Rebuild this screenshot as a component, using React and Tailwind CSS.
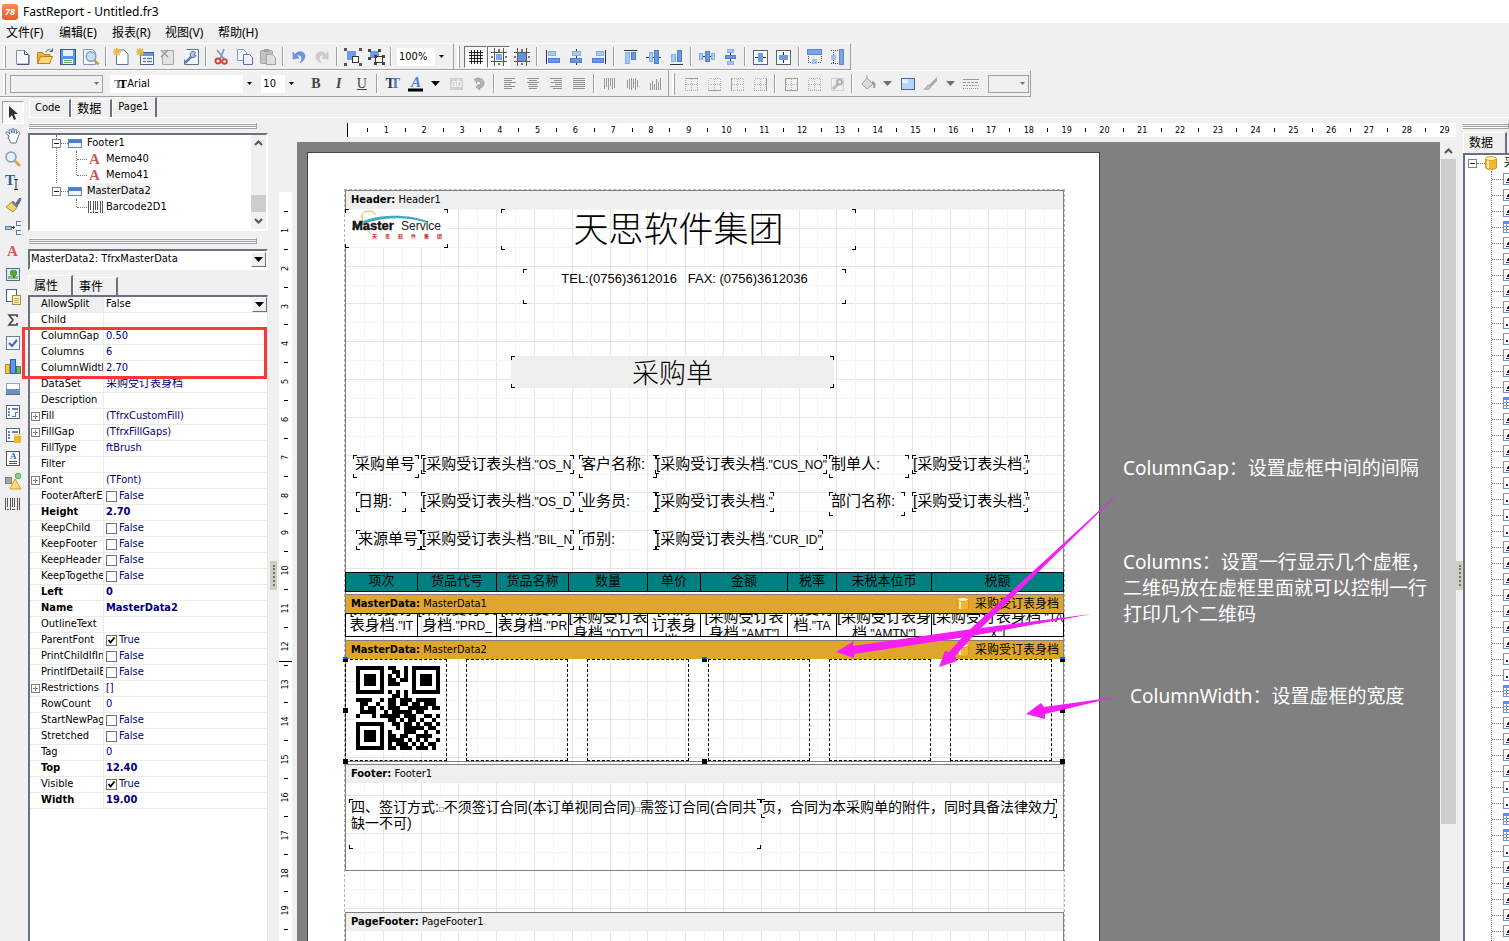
import React, { useState } from 'react';

const Svg = ({ s = 18, crisp, children }) => (
    <svg width={s} height={s} viewBox={`0 0 ${s} ${s}`} fill="none" shapeRendering={crisp ? 'crispEdges' : 'auto'} className="shrink-0">
        {children}
    </svg>
);

/* ---------- toolbar icons ---------- */

const PAGE = <path d="M4 2h7l4 4v10.500H3.500V2z" fill="#fff" stroke="#5b7499" />;
const SPARK = <path d="M4 0v8M0 4h8M1 1l6 6M7 1L1 7" stroke="#e8b93c" strokeWidth="1.500" />;

const NewIcon = () => <Svg><path d="M3.500 2.500h8l4 4v9.500h-12z" fill="#f6f9ff" stroke="#8194b3" /><path d="M11.500 2.500v4h4M4 16.500h12V7" stroke="#41597f" /></Svg>;
const OpenIcon = () => (
    <Svg>
        <path d="M1.500 15.500v-11h5l1.500 2h6v9z" fill="#f0b13d" stroke="#c07f22" />
        <path d="M1.500 15.500l3-7h12l-3 7z" fill="#ffd675" stroke="#c07f22" />
        <path d="M10 4c1-3 4-3 6-1M16.500.500v3h-3" stroke="#48658e" />
    </Svg>
);
const SaveIcon = () => (
    <Svg crisp>
        <rect x="1.500" y="1.500" width="15" height="15" fill="#5f92e0" stroke="#315b9f" />
        <rect x="4" y="2" width="10" height="6" fill="#e8f0fc" />
        <rect x="4" y="11" width="10" height="5" fill="#fff" />
        <path d="M5 12.500h8M5 14.500h8" stroke="#67ac5a" />
    </Svg>
);
const PreviewIcon = () => (
    <Svg>
        <path d="M1.500 1.500h9l3 3v12h-12z" fill="#f6f9ff" stroke="#8194b3" />
        <circle cx="9" cy="8.500" r="4.800" fill="#c6e0f7" stroke="#7f9fc4" strokeWidth="1.500" />
        <path d="M12.500 12.500l4 4" stroke="#d59a3b" strokeWidth="2.500" />
    </Svg>
);
const NewPageIcon = () => <Svg>{PAGE}{SPARK}</Svg>;
const NewDialogIcon = () => (
    <Svg>
        <rect x="4.500" y="4.500" width="13" height="12" fill="#fff" stroke="#47648f" />
        <rect x="5" y="5" width="12" height="3" fill="#6797df" />
        <path d="M7 10.500h3M7 13.500h3M11 10.500h5M11 13.500h5" stroke="#5a7bac" strokeWidth="1.500" />
        {SPARK}
    </Svg>
);
const DeletePageIcon = () => (
    <Svg><path d="M4.500 2.500h10v14h-11v-8" fill="#e4e4e4" stroke="#a8a8a8" /><path d="M2 2l7 7M9 2L2 9" stroke="#9c9c9c" strokeWidth="1.600" /></Svg>
);
const PageSetupIcon = () => (
    <Svg>
        <path d="M4.500 1.500h12v15h-14v-5" fill="#f4f7fd" stroke="#5b7499" />
        <path d="M3 15l7-7" stroke="#5e83bb" strokeWidth="2.500" />
        <path d="M13.500 4.500a3 3 0 1 0 .500 3l-2-.500z" fill="#b9c9df" stroke="#4f6b96" />
    </Svg>
);
const CutIcon = () => (
    <Svg>
        <path d="M11 1L7 11M4 2l7 9" stroke="#7d9cc4" strokeWidth="1.800" />
        <circle cx="5" cy="13" r="2.500" stroke="#d23c32" strokeWidth="1.800" /><circle cx="11.500" cy="13.500" r="2.300" stroke="#d23c32" strokeWidth="1.800" />
    </Svg>
);
const CopyIcon = () => (
    <Svg>
        <path d="M1.500 1.500h6l3 3v8h-9z" fill="#f5f8ff" stroke="#7f97bd" />
        <path d="M7.500 6.500h6l3 3v7h-9z" fill="#eaf1fd" stroke="#56729f" />
    </Svg>
);
const PasteIcon = () => (
    <Svg>
        <rect x="1.500" y="2.500" width="12" height="13" rx="1" fill="#c2c2c2" stroke="#a3a3a3" />
        <rect x="5" y="1" width="5" height="3" fill="#a0a0a0" />
        <path d="M7.500 6.500h6l3 3v7h-9z" fill="#dedede" stroke="#a0a0a0" />
    </Svg>
);
const UndoIcon = () => <Svg><path d="M5 7c2-5 10-4 10 1 0 3-2 5-5 7 2-3 3-7-1-8-1 0-2 1-2 1l2 2-6 1V4z" fill="#6d97e2" stroke="#4a74bd" strokeWidth=".500" /></Svg>;
const RedoIcon = () => <Svg><path d="M13 7c-2-5-10-4-10 1 0 3 2 5 5 7-2-3-3-7 1-8 1 0 2 1 2 1l-2 2 6 1V4z" fill="#cfcfcf" stroke="#b5b5b5" strokeWidth=".500" /></Svg>;
const GroupIcon = () => (
    <Svg crisp>
        <rect x="3" y="3" width="9" height="9" fill="#6d9be8" /><rect x="8.500" y="8.500" width="6" height="6" fill="#fff" stroke="#333" />
        {[[0, 0], [15, 0], [0, 15], [15, 15]].map(([x, y]) => <rect key={`${x}-${y}`} x={x} y={y} width="3" height="3" fill="#555" />)}
    </Svg>
);
const UngroupIcon = () => (
    <Svg crisp>
        <rect x="3" y="3" width="9" height="7" fill="#6d9be8" /><rect x="8.500" y="8.500" width="7" height="6" fill="#fff" stroke="#333" />
        {[[1, 1], [11, 1], [1, 9], [7, 7], [15, 7], [7, 14], [15, 14]].map(([x, y]) => <rect key={`${x}-${y}`} x={x} y={y} width="3" height="3" fill="#444" />)}
    </Svg>
);

const GridIcon = () => <Svg crisp><path d="M4.500 2v14M7.500 2v14M10.500 2v14M13.500 2v14M2 4.500h14M2 7.500h14M2 10.500h14M2 13.500h14" stroke="#222" /></Svg>;
const AlignGridIcon = () => (
    <Svg crisp><path d="M4.500 0v18M13.500 0v18M1 4.500h16M1 13.500h16" stroke="#555" /><rect x="6" y="6" width="6" height="6" fill="#7ba9ee" /><path d="M9 1v3M9 15v2M1 9h2M15 9h2" stroke="#777" strokeWidth="2" /></Svg>
);
const FitGridIcon = () => (
    <Svg crisp><path d="M4.500 0v18M13.500 0v18M1 4.500h16M1 13.500h16" stroke="#555" /><rect x="5" y="5" width="8" height="8" fill="#6294e2" /><path d="M9 1v3M9 15v2M1 9h2M15 9h2" stroke="#777" strokeWidth="2" /></Svg>
);

// each entry is a list of [x, y, w, h] bars plus the guide line
const alignShapes = {
    left: { bars: [[4, 3, 8, 5], [4, 10, 12, 5]], line: 'M2.5 2v14' },
    hcenter: { bars: [[5, 3, 9, 5], [3, 10, 12, 5]], line: 'M9.5 1v16' },
    right: { bars: [[6, 3, 8, 5], [2, 10, 12, 5]], line: 'M15.5 2v14' },
    top: { bars: [[4, 4, 5, 12], [10, 4, 5, 8]], line: 'M3 2.5h13' },
    vcenter: { bars: [[5, 4, 4, 10], [10, 2, 5, 14]], line: 'M2 9.5h15' },
    bottom: { bars: [[4, 6, 5, 8], [10, 2, 5, 12]], line: 'M3 16.5h13' },
    hspace: { bars: [[1, 5, 4, 7], [7, 3, 5, 11], [13, 5, 4, 7]], line: 'M2 8.5h15' },
    vspace: { bars: [[6, 1, 7, 4], [4, 7, 11, 4], [6, 13, 7, 4]], line: 'M9.5 1v16' },
};
const AlignIcon = ({ kind }) => (
    <Svg crisp>
        <path d={alignShapes[kind].line} stroke="#333" />
        {alignShapes[kind].bars.map(([x, y, w, h], i) => (
            <rect key={i} x={x + 0.5} y={y + 0.5} width={w - 1} height={h - 1} fill={i % 2 ? '#6d96e0' : '#a5c9fa'} stroke={i % 2 ? '#4f7fd0' : '#84b0f0'} />
        ))}
    </Svg>
);
const CenterHIcon = () => <Svg crisp><rect x="1.500" y="2.500" width="14" height="14" fill="#fff" stroke="#55647c" /><path d="M3 9.500h11" stroke="#333" /><rect x="6" y="5" width="5" height="9" fill="#6d9be8" /></Svg>;
const CenterVIcon = () => <Svg crisp><rect x="1.500" y="2.500" width="14" height="14" fill="#fff" stroke="#55647c" /><path d="M8.500 4v11" stroke="#333" /><rect x="4" y="7" width="9" height="5" fill="#6d9be8" /></Svg>;
const SameWidthIcon = () => <Svg crisp><rect x="1.500" y="1.500" width="14" height="5" fill="#7ba5ea" stroke="#5c87cf" /><path d="M2 8v5M15 8v5M2 14.500h13" stroke="#444" strokeDasharray="1 1" /><rect x="6" y="11" width="5" height="5" fill="#9cc3f8" /></Svg>;
const SameHeightIcon = () => <Svg crisp><rect x="10.500" y="1.500" width="4" height="15" fill="#7ba5ea" stroke="#5c87cf" /><path d="M2 2.500h7M2 15.500h7M4.500 2v14" stroke="#444" strokeDasharray="1 1" /><rect x="2" y="7" width="5" height="5" fill="#9cc3f8" /></Svg>;

const FontStyleIcon = () => (
    <span className="font-['Liberation_Serif'] text-[14px] leading-none font-bold"><span className="text-[#26364f]">T</span><span className="-ml-1 text-[#4d79b8]">T</span></span>
);
const FontColorIcon = () => (
    <Svg><text x="4" y="12" fontFamily="Liberation Serif" fontWeight="bold" fontStyle="italic" fontSize="15" fill="#4b82d4">A</text><path d="M1 15h15" stroke="#000" strokeWidth="3" /></Svg>
);
const HighlightIcon = () => <Svg><rect x="3" y="3" width="13" height="12" fill="#cfcfcf" /><text x="4" y="12" fontFamily="Liberation Sans" fontSize="10" fill="#fff">ab</text></Svg>;
const RotateIcon = () => <Svg><path d="M4 5c4-4 10-1 10 3 0 3-2 5-5 5l1 2-4-3 3-3v2c3-1 2-5-1-5-2 0-2 2-1 3" fill="#b5b5b5" stroke="#9f9f9f" /></Svg>;

const textLines = {
    left: [[3, 14], [3, 11], [3, 15], [3, 10], [3, 14], [3, 11]],
    center: [[3, 15], [5, 13], [3, 15], [5, 13], [4, 14], [5, 13]],
    right: [[3, 15], [7, 15], [4, 15], [8, 15], [3, 15], [6, 15]],
    justify: [[3, 15], [3, 15], [3, 15], [3, 15], [3, 15], [3, 15]],
};
const TextAlignIcon = ({ kind }) => (
    <Svg crisp>{textLines[kind].map(([a, b], i) => <path key={i} d={`M${a} ${3.5 + i * 2}H${b}`} stroke="#8f8f8f" />)}</Svg>
);
const barTops = { top: [3, 3, 3, 3, 3, 3], middle: [5, 4, 3, 4, 3, 5], bottom: [8, 6, 9, 4, 7, 3] };
const barEnds = { top: [14, 12, 15, 11, 14, 13], middle: [13, 14, 15, 13, 15, 12], bottom: [15, 15, 15, 15, 15, 15] };
const TextVAlignIcon = ({ kind }) => (
    <Svg crisp>{barTops[kind].map((t, i) => <path key={i} d={`M${3.5 + i * 2} ${t}V${barEnds[kind][i]}`} stroke="#999" />)}</Svg>
);
const frameEdges = { top: 'M3 3.5h13', bottom: 'M3 15.5h13', left: 'M3.5 3v13', right: 'M15.5 3v13', all: 'M3.5 3.5h12v12h-12z', none: '' };
const FrameIcon = ({ kind }) => (
    <Svg crisp>
        <path d="M3.500 3.500h12v12h-12zM9.500 4v11M4 9.500h11" stroke="#b3b3b3" strokeDasharray="1 1" />
        <path d={frameEdges[kind]} stroke="#9d9d9d" />
    </Svg>
);
const FrameEditIcon = () => (
    <Svg><path d="M3.500 3.500h12v12h-12z" stroke="#b3b3b3" strokeDasharray="1 1" /><path d="M5 14l6-6" stroke="#bbb" strokeWidth="3" /><circle cx="11.500" cy="7" r="2.500" stroke="#b0b0b0" strokeWidth="2" /></Svg>
);
const FillIcon = () => <Svg><path d="M8 3l6 6-6 5-5-5zM8 3V0" fill="#dcdcdc" stroke="#9e9e9e" /><path d="M13 7c3 1 3 3 2 6" stroke="#999" strokeWidth="2" /></Svg>;
const FrameFillIcon = () => (
    <Svg crisp><rect x="2.500" y="3.500" width="13" height="11" fill="#b8d2fb" stroke="#47679c" /><path d="M3 4h6v4H3z" fill="#e6effe" /></Svg>
);
const PenIcon = () => <Svg><path d="M15 2L7 10l2 2 6-6z" fill="#a8a8a8" /><path d="M7 10c-3 0-2 3-5 4 3 1 6 0 7-2z" fill="#bfbfbf" stroke="#a8a8a8" /></Svg>;
const LineStyleIcon = () => (
    <Svg crisp><path d="M1 4.500h16" stroke="#999" /><path d="M1 7.500h16" stroke="#999" strokeDasharray="3 1" /><path d="M1 10.500h16" stroke="#999" strokeDasharray="2 1" /><path d="M1 13.500h16" stroke="#999" strokeDasharray="1 1" /></Svg>
);

/* ---------- object palette icons ---------- */

const PointerIcon = () => <Svg><path d="M5 2v12l3-3 2 5 2-1-2-5h4z" fill="#2f3235" /></Svg>;
const HandIcon = () => <Svg><path d="M5 9L2 6.500c-1-1 1-2 2-1L6 7 5 3c0-1 1.500-1 2 0l1 3V2c0-1 2-1 2 0v4l1-3c.500-1 2-.500 1.700.500L12 7l2-2c1-.700 2 .300 1.500 1.300L13 13l-1 3H7L4 11z" fill="#fff" stroke="#5877a3" /></Svg>;
const LensIcon = () => <Svg><path d="M11 11l5 5" stroke="#d8a848" strokeWidth="3" /><circle cx="7" cy="7" r="5" fill="#e6f1fb" stroke="#7a9cc8" strokeWidth="1.500" /></Svg>;
const TextToolIcon = () => (
    <Svg><text x="1" y="12" fontFamily="Liberation Serif" fontWeight="bold" fontSize="15" fill="#2c6092">T</text><path d="M10 6.500h4M12 7v9M10 16.500h4" stroke="#333" /></Svg>
);
const BrushIcon = () => <Svg><path d="M12 7l4-5 1 1-3 6z" fill="#52698e" stroke="#52698e" /><path d="M9 5l5 5-5 6-7-5z" fill="#f3d36b" stroke="#b78f30" /><path d="M9 5l5 5-1.500 1.500-5-5z" fill="#5b7bb0" /></Svg>;
const LinkBandIcon = () => <Svg crisp><rect x="1" y="7" width="6" height="3" fill="#a9c5e8" stroke="#5e7ea6" /><path d="M7 8.500h4M9.500 7v3" stroke="#333" /><path d="M17 2.500h-5v4h5M17 11.500h-5v4h5" stroke="#5e7ea6" /></Svg>;
const MemoIcon = () => <Svg s={16}><text x="2" y="13" fontFamily="Liberation Serif" fontWeight="bold" fontSize="15" fill="#cf5d5d">A</text></Svg>;
const PictureIcon = () => <Svg crisp><rect x="2.500" y="3.500" width="13" height="12" fill="#d9ebfa" stroke="#4d6f8f" /><rect x="4" y="11" width="10" height="3" fill="#8cc26c" /><circle cx="9.500" cy="8" r="3.500" fill="#5ba246" /><path d="M9.500 11v2" stroke="#7c5a30" strokeWidth="2" /></Svg>;
const SubreportIcon = () => <Svg crisp><path d="M2.500 1.500h10v12h-10z" fill="#fff" stroke="#47648f" /><rect x="8.500" y="7.500" width="8" height="9" fill="#fdf3c0" stroke="#a98a38" /><path d="M10 10.500h5M10 12.500h5M10 14.500h5" stroke="#c9a850" /></Svg>;
const SumIcon = () => <Svg><path d="M13 6V4H5l4 5-4 5h8v-2" stroke="#444" strokeWidth="1.600" /></Svg>;
const CheckIcon = () => <Svg><rect x="2.500" y="2.500" width="13" height="13" fill="#f2f6fc" stroke="#6c7d99" /><path d="M5 9l3 3 5-6" stroke="#44689e" strokeWidth="2" /></Svg>;
const ChartIcon = () => <Svg crisp><rect x="1.500" y="7.500" width="4" height="9" fill="#f2c84c" stroke="#b88a22" /><rect x="6.500" y="2.500" width="5" height="14" fill="#5f9aea" stroke="#2c5faf" /><rect x="12.500" y="9.500" width="4" height="7" fill="#74b466" stroke="#4a853d" /></Svg>;
const BandIcon = () => <Svg crisp><rect x="2.500" y="3.500" width="13" height="11" fill="#fff" stroke="#8ea6c8" /><rect x="2" y="9" width="14" height="6" fill="#6b8fbe" /><path d="M2 14.500h14" stroke="#4d6d99" /></Svg>;
const CrossTabIcon = ({ db }) => (
    <Svg crisp>
        <rect x="2.500" y="2.500" width="13" height="13" fill="#fff" stroke="#47648f" />
        <path d="M4 5.500h2M8 5.500h6M4 8.500h2M4 11.500h2" stroke="#6684ad" strokeWidth="2" />
        {db ? <g><rect x="10" y="9" width="7" height="8" fill="#efb431" /><rect x="10" y="8" width="7" height="2" fill="#fbe08a" /></g> : <path d="M8 13.500h3v-4h3" stroke="#4d7db8" />}
    </Svg>
);
const RichIcon = () => <Svg crisp><rect x="2.500" y="2.500" width="13" height="14" fill="#fff" stroke="#555" /><text x="6" y="10" fontFamily="Liberation Serif" fontWeight="bold" fontSize="9" fill="#35639c">A</text><path d="M5 12.500h8M5 14.500h8" stroke="#555" /></Svg>;
const ShapesIcon = () => <Svg><rect x="1.500" y="5.500" width="6" height="6" fill="#a6a6a6" stroke="#808080" /><circle cx="14" cy="4" r="2.800" fill="#8dd08d" stroke="#5cab5c" /><path d="M11 7l6 10H6z" fill="#fbdb72" stroke="#d2a136" /></Svg>;
const BarcodeIcon = ({ s }) => <Svg s={s} crisp><path d="M1.500 3v12M3.500 3v9M6 3v12M8.500 3v9M10.500 3v9M13 3v12M15.500 3v12" stroke="#555" /><path d="M6.500 3v9M13.500 3v9M3 14.500h2M8 14.500h3" stroke="#555" /></Svg>;

const DbIcon = () => (
    <svg width="12" height="14" viewBox="0 0 12 14" className="shrink-0">
        <path d="M.500 2.500v9c0 2.500 11 2.500 11 0v-9" fill="#f2b632" stroke="#d8941a" />
        <path d="M3 4v8" stroke="#fff0b8" strokeWidth="2" />
        <ellipse cx="6" cy="2.500" rx="5.500" ry="2" fill="#fdf0c0" stroke="#e0a52c" />
    </svg>
);

/* ---------- small controls ---------- */

const ToolButton = ({ label, on, arrow, children }) => (
    <button
        aria-label={label}
        className={`flex h-[22px] shrink-0 items-center justify-center ${arrow ? 'w-[17px]' : 'w-[23px]'} ${on ? 'border border-t-gray-500 border-l-gray-500 border-r-white border-b-white bg-[#f8f8f8]' : ''}`}
    >
        {children}
    </button>
);
const Sep = () => <div className="mx-[3px] h-[19px] w-[2px] shrink-0 border-l border-[#a0a0a0] bg-white" />;
const Grip = () => <div className="mr-1 ml-[3px] h-[22px] w-[3px] shrink-0 border-r border-[#a0a0a0] bg-white" />;
const Caret = ({ color = 'text-black', big }) => (
    <svg width={big ? 9 : 5} height={big ? 5 : 3} viewBox="0 0 10 6" preserveAspectRatio="none" className={color}><path d="M0 0h10L5 6z" fill="currentColor" /></svg>
);

const Combo = ({ label, value, width, pad = 'pl-1', disabled }) => (
    <div className={`relative flex h-[18px] shrink-0 items-center ${width} ${disabled ? 'border border-[#a0a0a0]' : 'bg-white'}`}>
        <select aria-label={label} disabled={disabled} className={`h-full w-full appearance-none bg-transparent text-[11px] leading-none opacity-100 outline-none ${pad}`}>
            <option>{value}</option>
        </select>
        <div className="pointer-events-none absolute inset-y-0 right-0 flex w-3 items-center justify-center bg-[#f0f0f0]">
            <Caret color={disabled ? 'text-gray-500' : 'text-black'} />
        </div>
    </div>
);

const Toolbar = ({ width, children }) => (
    <div className={`flex h-[27px] shrink-0 items-center border-t border-r border-b border-t-white border-r-[#a0a0a0] border-b-[#a0a0a0] ${width}`}>
        <Grip />
        {children}
    </div>
);

const DoubleLine = () => (
    <div className="flex h-[6px] shrink-0 flex-col justify-between border-r border-[#a0a0a0]">
        <div className="h-[2px] border-b border-[#a0a0a0] bg-white" />
        <div className="h-[3px] border-y border-[#a0a0a0] bg-white" />
    </div>
);

const Tab = ({ active, children }) => (
    <button className={`shrink-0 border-t border-l border-t-white border-l-white border-r-2 border-r-gray-500 px-[5px] text-left whitespace-nowrap ${active ? 'h-full' : 'h-[18px]'}`}>
        {children}
    </button>
);

/* ---------- left side ---------- */

const palette = [PointerIcon, HandIcon, LensIcon, TextToolIcon, BrushIcon, LinkBandIcon, MemoIcon, PictureIcon, SubreportIcon, SumIcon, CheckIcon, ChartIcon, BandIcon, CrossTabIcon, () => <CrossTabIcon db />, RichIcon, ShapesIcon, BarcodeIcon];

const ObjectPalette = () => (
    <aside className="flex w-7 shrink-0 flex-col items-start border-t border-white pt-[3px] pl-[2px]">
        {palette.map((Icon, i) => (
            <button key={i} aria-label={`tool ${i + 1}`} className={`flex h-[23px] w-[22px] items-center justify-center ${i === 0 ? 'border border-t-gray-400 border-l-gray-400 border-r-white border-b-white bg-[#f8f8f8]' : ''}`}>
                <Icon />
            </button>
        ))}
    </aside>
);

const Expander = ({ plus }) => (
    <svg width="9" height="9" viewBox="0 0 9 9" shapeRendering="crispEdges" className="shrink-0">
        <rect x=".500" y=".500" width="8" height="8" fill="#fff" stroke="#808080" />
        <path d={plus ? 'M2 4.500h5M4.500 2v5' : 'M2 4.500h5'} stroke={plus ? '#808080' : '#222'} />
    </svg>
);
const Dots = ({ w }) => <div className={`shrink-0 border-t border-dotted border-gray-500 ${w}`} />;

const BandGlyph = () => <div className="h-[9px] w-[14px] shrink-0 border border-[#5f86bd] bg-linear-to-b from-[#4a7fd0] from-40% to-[#eef4fc] to-50%" />;

const ObjectTree = () => (
    <div className="flex h-[98px] shrink-0 border-2 border-t-gray-500 border-l-gray-500 border-r-white border-b-white bg-white">
        <div className="relative min-w-0 flex-1 text-[11px] whitespace-nowrap">
            <div className="absolute top-0 left-[26px] h-12 border-l border-dotted border-gray-500" />
            <div className="absolute top-4 left-[46px] h-6 border-l border-dotted border-gray-500" />
            <div className="absolute top-[64px] left-[46px] h-2 border-l border-dotted border-gray-500" />
            <div className="relative flex h-4 items-center pl-[22px]"><Expander /><Dots w="w-[7px]" /><BandGlyph /><span className="ml-[5px]">Footer1</span></div>
            <div className="flex h-4 items-center pl-[47px]"><Dots w="w-[10px]" /><MemoIcon /><span className="ml-[3px]">Memo40</span></div>
            <div className="flex h-4 items-center pl-[47px]"><Dots w="w-[10px]" /><MemoIcon /><span className="ml-[3px]">Memo41</span></div>
            <div className="relative flex h-4 items-center pl-[22px]"><Expander /><Dots w="w-[7px]" /><BandGlyph /><span className="ml-1 bg-[#f0f0f0] px-px">MasterData2</span></div>
            <div className="flex h-4 items-center pl-[47px]"><Dots w="w-[10px]" /><BarcodeIcon /><span className="ml-px">Barcode2D1</span></div>
        </div>
        <div className="flex w-[15px] shrink-0 flex-col items-center justify-between bg-[#f0f0f0] py-1">
            <svg width="9" height="9" viewBox="0 0 9 9"><path d="M1 6l3.500-3.500L8 6" fill="none" stroke="#555" strokeWidth="2" /></svg>
            <div className="mt-[42px] h-[17px] w-full bg-[#cdcdcd]" />
            <svg width="9" height="9" viewBox="0 0 9 9"><path d="M1 3l3.500 3.500L8 3" fill="none" stroke="#555" strokeWidth="2" /></svg>
        </div>
    </div>
);

const ClassicArrow = () => (
    <span className="pointer-events-none flex h-[15px] w-[15px] shrink-0 items-center justify-center border border-t-white border-l-white border-r-gray-500 border-b-gray-500 bg-[#f0f0f0]">
        <Caret big />
    </span>
);

// [name, value, flag]: b = bold, + = expandable, s = selected row
const props = [
    ['AllowSplit', 'False', 's'],
    ['Child', ''],
    ['ColumnGap', '0.50'],
    ['Columns', '6'],
    ['ColumnWidth', '2.70'],
    ['DataSet', '采购受订表身档'],
    ['Description', ''],
    ['Fill', '(TfrxCustomFill)', '+'],
    ['FillGap', '(TfrxFillGaps)', '+'],
    ['FillType', 'ftBrush'],
    ['Filter', ''],
    ['Font', '(TFont)', '+'],
    ['FooterAfterEach', false],
    ['Height', '2.70', 'b'],
    ['KeepChild', false],
    ['KeepFooter', false],
    ['KeepHeader', false],
    ['KeepTogether', false],
    ['Left', '0', 'b'],
    ['Name', 'MasterData2', 'b'],
    ['OutlineText', ''],
    ['ParentFont', true],
    ['PrintChildIfInvisible', false],
    ['PrintIfDetailEmpty', false],
    ['Restrictions', '[]', '+'],
    ['RowCount', '0'],
    ['StartNewPage', false],
    ['Stretched', false],
    ['Tag', '0'],
    ['Top', '12.40', 'b'],
    ['Visible', true],
    ['Width', '19.00', 'b'],
];

const PropRow = ({ name, value, flag }) => {
    const [checked, setChecked] = useState(value === true);
    const isBool = typeof value === 'boolean';
    const selected = flag === 's';
    return (
        <tr className={`h-4 ${flag === 'b' ? 'font-bold' : ''}`}>
            <th scope="row" className={`border-r border-b border-[#ebebeb] p-0 text-left ${selected ? 'bg-[#f0f0f0]' : ''} ${flag === 'b' ? 'font-bold' : 'font-normal'}`}>
                <div className="flex h-[15px] items-center overflow-hidden pl-px">
                    <span className="w-[10px] shrink-0">{flag === '+' && <Expander plus />}</span>
                    {name}
                </div>
            </th>
            <td className={`border-b border-[#ebebeb] p-0 ${selected ? 'text-black' : 'text-[#000080]'}`}>
                <div className="flex h-[15px] items-center pl-[2px]">
                    {isBool ? (
                        <label className="flex items-center gap-[2px]">
                            <span className="relative flex">
                                <input type="checkbox" checked={checked} onChange={() => setChecked(!checked)} className="h-[11px] w-[11px] appearance-none border border-gray-500 bg-white" />
                                {checked && <svg width="11" height="11" viewBox="0 0 11 11" className="pointer-events-none absolute inset-0"><path d="M2.500 5l2 2.500 4-5" fill="none" stroke="#000" strokeWidth="1.800" /></svg>}
                            </span>
                            {checked ? 'True' : 'False'}
                        </label>
                    ) : <span className="flex-1">{value}</span>}
                    {selected && <ClassicArrow />}
                </div>
            </td>
        </tr>
    );
};

const Inspector = () => (
    <section className="flex w-[242px] shrink-0 flex-col pt-[5px] pr-[2px] text-[11px]">
        <div className="mr-[11px] ml-px"><DoubleLine /></div>
        <div className="mt-1"><ObjectTree /></div>
        <div className="mt-[7px] mr-[11px] ml-px"><DoubleLine /></div>
        <div className="mt-[5px] flex h-[21px] shrink-0 items-center border-2 border-t-gray-500 border-l-gray-500 border-r-white border-b-white bg-white">
            <select aria-label="object" className="min-w-0 flex-1 appearance-none bg-transparent pl-px outline-none">
                <option>MasterData2: TfrxMasterData</option>
            </select>
            <ClassicArrow />
        </div>
        <div className="mt-[5px] flex h-5 shrink-0 items-end text-[12px]">
            <Tab active><span className="pr-2">属性</span></Tab>
            <Tab><span className="pr-2">事件</span></Tab>
        </div>
        <div className="relative min-h-0 flex-1 border-t-2 border-r border-l-2 border-t-gray-500 border-r-gray-200 border-l-gray-500 bg-white">
            <table className="w-full table-fixed border-separate border-spacing-0 whitespace-nowrap">
                <colgroup><col className="w-[74px]" /><col /></colgroup>
                <tbody>
                    {props.map(([name, value, flag]) => <PropRow key={name} name={name} value={value} flag={flag} />)}
                </tbody>
            </table>
            <div className="pointer-events-none absolute top-[30px] right-0 -left-2 h-[52px] border-[3px] border-[#f93838]" />
        </div>
    </section>
);

const Splitter = ({ top }) => (
    <div className={`w-[7px] shrink-0 ${top}`}>
        <div className="flex h-[29px] justify-center bg-[#cfcfc0] py-1"><div className="border-l-2 border-dotted border-gray-500" /></div>
    </div>
);

/* ---------- report page ---------- */

const FULL = 719;
const QR = [
    '111111101100101111111',
    '100000100110101000001',
    '101110101010101011101',
    '101110101101101011101',
    '101110101110001011101',
    '100000100000001000001',
    '111111101010101111111',
    '000000000110100000000',
    '111100101101110111110',
    '011001001101101101110',
    '010110101110011111011',
    '011110010111110110000',
    '100010111110111001101',
    '000000001101011010010',
    '111111100110110101101',
    '100000100010111110110',
    '101110101000111001001',
    '101110101101100111100',
    '101110101111010101001',
    '100000101011101010110',
    '111111101101110111010',
];

const QrCode = () => (
    <svg width="84" height="84" viewBox="0 0 21 21" shapeRendering="crispEdges" className="bg-white">
        {QR.map((row, y) => row.split('').map((c, x) => c === '1' && <rect key={`${x}-${y}`} x={x} y={y} width="1" height="1" />))}
    </svg>
);

// centimetre grid with a lighter half-centimetre line
const CmGrid = () => (
    <svg className="absolute inset-0 h-full w-full" shapeRendering="crispEdges">
        {Array.from({ length: 42 }, (_, i) => i + 1).map((i) => {
            const p = Math.round(i * 18.9) + 0.5;
            const color = i % 2 ? '#f6f6f6' : '#e5e5e5';
            return <path key={i} d={`M0 ${p}H${FULL}${p < FULL ? `M${p} 0V800` : ''}`} stroke={color} />;
        })}
    </svg>
);

const Corners = () => (
    <>
        <i className="absolute top-0 left-0 h-1 w-1 border-t border-l border-black" />
        <i className="absolute top-0 right-0 h-1 w-1 border-t border-r border-black" />
        <i className="absolute bottom-0 left-0 h-1 w-1 border-b border-l border-black" />
        <i className="absolute right-0 bottom-0 h-1 w-1 border-r border-b border-black" />
    </>
);

// report objects sit on a free canvas, so each carries its own box, measured from the band's outer edge
const Memo = ({ box: [x, y, w, h], className = '', children }) => (
    <div className={`absolute whitespace-nowrap ${className}`} style={{ left: x - 1, top: y - 1, width: w, height: h }}>
        {children}
        <Corners />
    </div>
);

// latin tails of the expressions are set smaller than the CJK part
const Expr = ({ text }) => {
    const at = text.search(/[."A-Z]/);
    if (at < 0) return text;
    return <>{text.slice(0, at)}<span className="text-[12px] leading-none">{text.slice(at)}</span></>;
};

const labels = [
    [8, 265, 66, 23, '采购单号'], [234, 265, 78, 23, '客户名称:'], [484, 265, 80, 23, '制单人:'],
    [11, 302, 50, 20, '日期:'], [234, 302, 78, 20, '业务员:'], [484, 302, 76, 24, '部门名称:'],
    [11, 340, 65, 20, '来源单号'], [234, 340, 78, 20, '币别:'],
];
const fields = [
    [76, 265, 153, 19, '."OS_N'], [310, 265, 172, 19, '."CUS_NO"'], [567, 265, 116, 19, '."'],
    [76, 302, 153, 20, '."OS_D'], [310, 302, 119, 20, '."'], [567, 302, 116, 20, '."'],
    [76, 340, 153, 20, '."BIL_N'], [310, 340, 168, 20, '."CUR_ID"'],
];

const columns = [
    ['项次', 'w-[72px]', ['[采购受订', '表身档."IT', '']],
    ['货品代号', 'w-[79px]', ['[采购受订表', '身档."PRD_', '']],
    ['货品名称', 'w-[72px]', ['[采购受订', '表身档."PR', '']],
    ['数量', 'w-[79px]', ['[采购受订表', '身档."QTY"]']],
    ['单价', 'w-[53px]', ['[采购', '订表身', '档."']],
    ['金额', 'w-[87px]', ['[采购受订表', '身档."AMT"]']],
    ['税率', 'w-[49px]', ['购受订', '档."TA', '']],
    ['未税本位币', 'w-[95px]', ['[采购受订表身', '档."AMTN"]']],
    ['税额', '', ['[采购受订表身档."TA', 'X"]']],
];
const Cols = () => <colgroup>{columns.map(([name, w]) => <col key={name} className={w} />)}</colgroup>;

const Band = ({ kind, name, master, children, className = '' }) => (
    <section className={`relative border-x border-t border-[#808080] ${className}`}>
        <header className={`relative flex h-[18px] items-center justify-between px-1 text-[11px] ${master ? 'bg-[#dfa62f]' : 'bg-[#efefef]'}`}>
            <span className="pl-px"><b>{kind}:</b> {name}</span>
            {master && <span className="flex items-center gap-[6px] text-[12px]"><DbIcon />采购受订表身档</span>}
        </header>
        {children}
    </section>
);

const Logo = () => (
    <svg width="102" height="38" viewBox="0 0 102 38" className="bg-white">
        <path d="M7 20C18 5 62 3 84 13l-2 1C60 6 24 8 8 21z" fill="#44a9bf" />
        <path d="M30 6c0-6-13-5-13 1 0 8 4 14 9 18" fill="none" stroke="#e2b23b" />
        <text x="7" y="21" fontFamily="Liberation Sans" fontSize="13" fontWeight="bold" fill="#111" stroke="#111" strokeWidth=".400">Master</text>
        <text x="56" y="21" fontFamily="Liberation Sans" fontSize="12" fill="#222">Service</text>
        {'天思软件集团'.split('').map((c, i) => <text key={c} x={27 + i * 13} y="29" fontFamily="Noto Sans CJK SC" fontSize="5" fontWeight="bold" fill="#c4291f">{c}</text>)}
    </svg>
);

const handles = [[0, 18], [359, 18], [717, 18], [0, 69], [717, 69], [0, 120], [359, 120], [717, 120]];

const ReportPage = () => (
    <div className="min-h-full w-[793px] shrink-0 border border-[#444] bg-white pt-[36px] pl-[36px]">
        <div className="relative min-h-[753px] w-[721px] border-x border-t border-dashed border-[#b5b5b5]">
            <CmGrid />
            <Band kind="Header" name="Header1" className="h-[404px]">
                <Memo box={[0, 19, 103, 39]}><Logo /></Memo>
                <Memo box={[156, 19, 355, 41]} className="text-center font-['Noto_Sans_CJK_SC'] text-[35px] leading-9 font-light">天思软件集团</Memo>
                <Memo box={[178, 79, 323, 35]} className="text-center font-['Liberation_Sans'] text-[13px] leading-5 whitespace-pre">{'TEL:(0756)3612016   FAX: (0756)3612036'}</Memo>
                <Memo box={[166, 166, 323, 32]} className="bg-[#efefef] text-center font-['Noto_Sans_CJK_SC'] text-[27px] leading-8 font-light">采购单</Memo>
                {labels.map(([x, y, w, h, text]) => (
                    <Memo key={text} box={[x, y, w, h]} className="pl-[2px] font-['Liberation_Sans','Noto_Sans_CJK_SC'] text-[15px] leading-[18px]">{text}</Memo>
                ))}
                {fields.map(([x, y, w, h, latin]) => (
                    <Memo key={`${x}-${y}`} box={[x, y, w, h]} className="pl-px font-['Liberation_Sans','Noto_Sans_CJK_SC'] text-[15px] leading-[18px]">
                        <Expr text={`[采购受订表头档${latin}`} />
                    </Memo>
                ))}
                <table className="absolute right-0 bottom-[2px] -left-px w-[719px] table-fixed border-collapse bg-[#008080] font-['Noto_Sans_CJK_SC'] text-[13px] leading-[14px]">
                    <Cols />
                    <thead><tr>{columns.map(([name]) => <th key={name} className="h-[19px] border border-black p-0 align-top font-normal">{name}</th>)}</tr></thead>
                </table>
            </Band>
            <Band kind="MasterData" name="MasterData1" master className="h-[46px]">
                <table className="relative -ml-px w-[719px] table-fixed border-collapse font-['Liberation_Sans','Noto_Sans_CJK_SC'] text-[15px] leading-4">
                    <Cols />
                    <tbody>
                        <tr>
                            {columns.map(([name, , lines]) => (
                                <td key={name} className="border border-black p-0">
                                    <div className="flex h-[22px] flex-col items-center justify-center overflow-hidden whitespace-nowrap">
                                        {lines.map((line, i) => <div key={i} className="h-4 shrink-0"><Expr text={line} /></div>)}
                                    </div>
                                </td>
                            ))}
                        </tr>
                    </tbody>
                </table>
            </Band>
            <Band kind="MasterData" name="MasterData2" master className="h-[122px] border-b">
                <div className="relative -ml-px flex gap-[19px]">
                    {[0, 1, 2, 3, 4, 5].map((i) => (
                        <div key={i} className="h-[102px] w-[102px] shrink-0 border border-dashed border-black pt-[6px] pl-[10px]">{i === 0 && <QrCode />}</div>
                    ))}
                </div>
                {handles.map(([x, y]) => <i key={`${x}-${y}`} className={`absolute -ml-[3px] h-[5px] w-[5px] bg-black ${y === 18 ? 'border-t-2 border-blue-600' : ''}`} style={{ left: x, top: y - 2 }} />)}
            </Band>
            <Band kind="Footer" name="Footer1" className="mt-[2px] h-[107px] border-b">
                <Memo box={[4, 35, 412, 50]} className="pl-[2px] font-['Liberation_Sans','Noto_Sans_CJK_SC'] text-[14px] leading-4">
                    四、签订方式:<span className="text-[8px] leading-none">□</span>不须签订合同(本订单视同合同)<span className="text-[8px] leading-none">□</span>需签订合同(合同共<br />缺一不可)
                </Memo>
                <Memo box={[416, 35, 296, 19]} className="pl-px font-['Liberation_Sans','Noto_Sans_CJK_SC'] text-[14px] leading-4">页，合同为本采购单的附件，同时具备法律效力</Memo>
            </Band>
            <Band kind="PageFooter" name="PageFooter1" className="mt-[41px] h-[60px]" />
        </div>
    </div>
);

const Notes = () => (
    <div className="pointer-events-none absolute inset-0 font-['Noto_Sans','Noto_Sans_CJK_SC'] text-[19px] leading-[26px] text-white">
        <p className="absolute top-[313px] left-[826px] whitespace-nowrap">ColumnGap：设置虚框中间的间隔</p>
        <p className="absolute top-[407px] left-[826px] whitespace-nowrap">Columns：设置一行显示几个虚框，<br />二维码放在虚框里面就可以控制一行<br />打印几个二维码</p>
        <p className="absolute top-[541px] left-[833px] whitespace-nowrap">ColumnWidth：设置虚框的宽度</p>
        <svg className="absolute inset-0 h-full w-full" fill="#f51ef5">
            <g transform="translate(-297 -142)">
                <path d="M1127 485L976 633 955 656l2 5-18 6 6-16 4 1 17-19z" />
                <path d="M1092 614L965 630l-112 16 1-5-18 11 18 6v-4l112-17z" />
                <path d="M1116 697l-72 10-3-4-15 11 19 5v-5z" />
            </g>
        </svg>
    </div>
);

const Designer = () => (
    <section className="flex min-w-0 flex-1 flex-col overflow-hidden pt-[5px] font-['DejaVu_Sans_Condensed'] text-[9px] leading-none">
        <div className="ml-[70px] flex h-[14px] shrink-0 overflow-hidden border-l border-black bg-white pl-[19px]">
            <div className="grid w-[1096px] shrink-0 grid-cols-29">
                {Array.from({ length: 29 }, (_, i) => (
                    <div key={i} className="flex items-center"><i className="h-1 w-px bg-black" /><span className="flex-1 text-center">{i + 1}</span></div>
                ))}
            </div>
        </div>
        <div className="mt-[5px] flex min-h-0 flex-1">
            <div className="relative mt-[50px] ml-[2px] w-[13px] shrink-0 overflow-hidden bg-white pt-[19px]">
                <div className="grid h-[756px] grid-rows-20">
                    {Array.from({ length: 20 }, (_, i) => (
                        <div key={i} className="flex flex-col items-center"><i className="h-px w-1 bg-black" /><span className="flex flex-1 -rotate-90 items-center">{i + 1}</span></div>
                    ))}
                </div>
                <i className="absolute top-[469px] left-0 h-px w-full bg-black" />
            </div>
            <div className="relative ml-[5px] min-w-0 flex-1 overflow-hidden bg-[#808080] pt-[10px] pl-[10px] font-['DejaVu_Sans_Condensed','Noto_Sans_CJK_SC'] leading-normal">
                <ReportPage />
                <Notes />
            </div>
            <div className="flex w-4 shrink-0 flex-col items-center bg-[#f0f0f0]">
                <svg width="9" height="17" viewBox="0 0 9 17" className="shrink-0"><path d="M1 11l3.500-3.500L8 11" fill="none" stroke="#555" strokeWidth="2" /></svg>
                <div className="h-[665px] w-[15px] bg-[#cdcdcd]" />
            </div>
        </div>
    </section>
);

/* ---------- right side ---------- */

const fieldTypes = 'AAATAAAAA..AAATAAAA....AAAAAAA..TTAAAA..TT.AAAAA'.split('');
const FieldGlyph = ({ type }) => (
    <svg width="14" height="12" viewBox="0 0 14 12" shapeRendering="crispEdges" className="shrink-0">
        <rect x=".500" y=".500" width="13" height="11" fill="#fff" stroke="#7594bd" />
        {type === 'A' && <path d="M3 9.500h3M4.500 8L8 2" stroke="#223" strokeWidth="1.500" />}
        {type === '.' && <rect x="3" y="7" width="2" height="2" fill="#223" />}
        {type === 'T' && <g><rect width="14" height="3" fill="#5b8df0" /><path d="M0 5.500h14M0 8.500h14M3.500 3v9M8.500 3v9" stroke="#7594bd" /></g>}
    </svg>
);

const DataPanel = () => (
    <aside className="flex w-[46px] shrink-0 flex-col overflow-hidden pt-[5px] text-[12px]">
        <DoubleLine />
        <div className="mt-[3px] flex h-[21px] shrink-0"><Tab active><span className="pr-[7px]">数据</span></Tab></div>
        <div className="relative min-h-0 flex-1 overflow-hidden border-t-2 border-l-2 border-gray-500 bg-white">
            <div className="absolute top-4 bottom-0 left-[26px] border-l border-dotted border-gray-500" />
            <div className="flex h-4 items-center pl-[3px] whitespace-nowrap"><Expander /><Dots w="w-2" /><DbIcon /><span className="ml-[7px]">采购受订表头档</span></div>
            {fieldTypes.map((t, i) => (
                <div key={i} className="flex h-4 items-center pl-[27px]"><Dots w="w-[11px]" /><FieldGlyph type={t} /></div>
            ))}
        </div>
    </aside>
);

/* ---------- window ---------- */

const menu = ['文件(F)', '编辑(E)', '报表(R)', '视图(V)', '帮助(H)'];

const App = () => (
    <div className="flex h-screen flex-col overflow-hidden bg-[#f0f0f0] font-['DejaVu_Sans_Condensed','Noto_Sans_CJK_SC',sans-serif] text-black">
        <header className="flex h-[23px] shrink-0 items-center gap-[5px] bg-white pl-[2px] font-['Noto_Sans'] text-[12px]">
            <span className="flex h-4 w-4 items-center justify-center rounded-[3px] bg-linear-to-b from-[#ff8a4a] to-[#f0592a] text-[9px] font-bold text-white italic">78</span>
            FastReport - Untitled.fr3
        </header>
        <nav className="flex h-5 shrink-0 items-center gap-[13px] pl-[6px] font-['Noto_Sans','Noto_Sans_CJK_SC'] text-[12px]">
            {menu.map((m) => <button key={m} className="w-10 text-left whitespace-nowrap">{m}</button>)}
        </nav>
        <div className="flex shrink-0">
            <Toolbar width="w-[454px]">
                <ToolButton label="New"><NewIcon /></ToolButton>
                <ToolButton label="Open"><OpenIcon /></ToolButton>
                <ToolButton label="Save"><SaveIcon /></ToolButton>
                <ToolButton label="Preview"><PreviewIcon /></ToolButton>
                <Sep />
                <ToolButton label="New page"><NewPageIcon /></ToolButton>
                <ToolButton label="New dialog"><NewDialogIcon /></ToolButton>
                <ToolButton label="Delete page"><DeletePageIcon /></ToolButton>
                <ToolButton label="Page settings"><PageSetupIcon /></ToolButton>
                <Sep />
                <ToolButton label="Cut"><CutIcon /></ToolButton>
                <ToolButton label="Copy"><CopyIcon /></ToolButton>
                <ToolButton label="Paste"><PasteIcon /></ToolButton>
                <Sep />
                <ToolButton label="Undo"><UndoIcon /></ToolButton>
                <ToolButton label="Redo"><RedoIcon /></ToolButton>
                <Sep />
                <ToolButton label="Group"><GroupIcon /></ToolButton>
                <ToolButton label="Ungroup"><UngroupIcon /></ToolButton>
                <Sep />
                <Combo label="Zoom" value="100%" width="w-[50px] ml-[2px]" pad="pl-[2px]" />
            </Toolbar>
            <Toolbar width="w-[397px]">
                <ToolButton label="Show grid" on><GridIcon /></ToolButton>
                <ToolButton label="Align to grid" on><AlignGridIcon /></ToolButton>
                <ToolButton label="Fit to grid"><FitGridIcon /></ToolButton>
                <Sep />
                <ToolButton label="Align left"><AlignIcon kind="left" /></ToolButton>
                <ToolButton label="Align centers"><AlignIcon kind="hcenter" /></ToolButton>
                <ToolButton label="Align right"><AlignIcon kind="right" /></ToolButton>
                <Sep />
                <ToolButton label="Align top"><AlignIcon kind="top" /></ToolButton>
                <ToolButton label="Align middles"><AlignIcon kind="vcenter" /></ToolButton>
                <ToolButton label="Align bottom"><AlignIcon kind="bottom" /></ToolButton>
                <Sep />
                <ToolButton label="Space horizontally"><AlignIcon kind="hspace" /></ToolButton>
                <ToolButton label="Space vertically"><AlignIcon kind="vspace" /></ToolButton>
                <Sep />
                <ToolButton label="Center horizontally"><CenterHIcon /></ToolButton>
                <ToolButton label="Center vertically"><CenterVIcon /></ToolButton>
                <Sep />
                <ToolButton label="Same width"><SameWidthIcon /></ToolButton>
                <ToolButton label="Same height"><SameHeightIcon /></ToolButton>
            </Toolbar>
        </div>
        <div className="flex shrink-0">
            <Toolbar width="w-[669px]">
                <Combo label="Style" value="" width="w-[93px]" disabled />
                <div className="ml-[7px] flex h-[18px] items-center bg-white pl-1 font-['Liberation_Serif'] text-[13px] leading-none font-bold"><span className="text-gray-500">T</span><span className="-ml-1">T</span></div>
                <Combo label="Font name" value="Arial" width="w-[128px]" pad="pl-0" />
                <Combo label="Font size" value="10" width="ml-[6px] w-[36px]" pad="pl-[2px]" />
                <div className="ml-[7px] flex font-['Liberation_Serif'] text-[14px] text-[#444]">
                    <ToolButton label="Bold"><b>B</b></ToolButton>
                    <ToolButton label="Italic"><b><i>I</i></b></ToolButton>
                    <ToolButton label="Underline"><u>U</u></ToolButton>
                </div>
                <Sep />
                <ToolButton label="Font"><FontStyleIcon /></ToolButton>
                <ToolButton label="Font color"><FontColorIcon /></ToolButton>
                <ToolButton label="Font color menu" arrow><Caret big /></ToolButton>
                <ToolButton label="Highlight"><HighlightIcon /></ToolButton>
                <ToolButton label="Rotation"><RotateIcon /></ToolButton>
                <Sep />
                <ToolButton label="Text left"><TextAlignIcon kind="left" /></ToolButton>
                <ToolButton label="Text center"><TextAlignIcon kind="center" /></ToolButton>
                <ToolButton label="Text right"><TextAlignIcon kind="right" /></ToolButton>
                <ToolButton label="Text justify"><TextAlignIcon kind="justify" /></ToolButton>
                <Sep />
                <ToolButton label="Text top"><TextVAlignIcon kind="top" /></ToolButton>
                <ToolButton label="Text middle"><TextVAlignIcon kind="middle" /></ToolButton>
                <ToolButton label="Text bottom"><TextVAlignIcon kind="bottom" /></ToolButton>
            </Toolbar>
            <Toolbar width="w-[362px]">
                <ToolButton label="Top line"><FrameIcon kind="top" /></ToolButton>
                <ToolButton label="Bottom line"><FrameIcon kind="bottom" /></ToolButton>
                <ToolButton label="Left line"><FrameIcon kind="left" /></ToolButton>
                <ToolButton label="Right line"><FrameIcon kind="right" /></ToolButton>
                <Sep />
                <ToolButton label="All lines"><FrameIcon kind="all" /></ToolButton>
                <ToolButton label="No lines"><FrameIcon kind="none" /></ToolButton>
                <ToolButton label="Edit frame"><FrameEditIcon /></ToolButton>
                <Sep />
                <ToolButton label="Fill"><FillIcon /></ToolButton>
                <ToolButton label="Fill menu" arrow><Caret big color="text-gray-500" /></ToolButton>
                <ToolButton label="Edit fill"><FrameFillIcon /></ToolButton>
                <ToolButton label="Frame color"><PenIcon /></ToolButton>
                <ToolButton label="Frame color menu" arrow><Caret big color="text-gray-500" /></ToolButton>
                <ToolButton label="Frame style"><LineStyleIcon /></ToolButton>
                <Combo label="Frame width" value="" width="ml-[6px] w-[41px]" disabled />
            </Toolbar>
        </div>
        <main className="flex min-h-0 flex-1">
            <ObjectPalette />
            <div className="flex min-w-0 flex-1 flex-col">
                <div className="flex h-[21px] shrink-0 items-end border-b border-white pl-px text-[11px]">
                    <Tab><span className="pr-1">Code</span></Tab>
                    <Tab><span className="pr-1 text-[12px]">数据</span></Tab>
                    <Tab active><span className="pr-px">Page1</span></Tab>
                </div>
                <div className="flex min-h-0 flex-1">
                    <Inspector />
                    <Splitter top="pt-[443px]" />
                    <Designer />
                    <Splitter top="pt-[443px]" />
                    <DataPanel />
                </div>
            </div>
        </main>
    </div>
);

export default App;
